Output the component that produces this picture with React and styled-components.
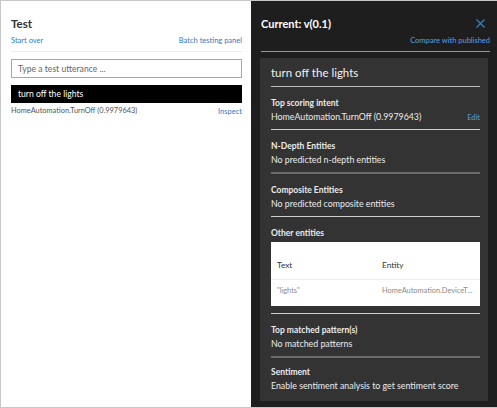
import React from 'react';
import styled, { createGlobalStyle } from 'styled-components';

const Global = createGlobalStyle`
  body {
    margin: 0;
    background: #fff;
    font-family: "Segoe UI", Lato, "Noto Sans", sans-serif;
  }
`;

const Frame = styled.div`
  width: 497px;
  height: 408px;
  box-sizing: border-box;
  border: 1px solid #c6c6c6;
  border-right: none;
  display: grid;
  grid-template-columns: 250px minmax(0, 1fr);
`;

const TestPanel = styled.div`
  padding: 14px 9px 0 10px;
  display: flex;
  flex-direction: column;
`;

const Title = styled.div`
  font-size: ${(p) => (p.dark ? 11 : 11.5)}px;
  font-weight: 700;
  color: ${(p) => (p.dark ? '#fff' : '#333')};
  line-height: 17px;
`;

const LinkRow = styled.div`
  display: flex;
  justify-content: ${(p) => p.justify || 'space-between'};
  margin-top: ${(p) => p.top || 0}px;
  padding-bottom: 5px;
  border-bottom: 1px solid ${(p) => p.line || '#ececec'};
`;

const Link = styled.span`
  font-size: 7.5px;
  color: ${(p) => (p.dark ? '#5aa0e0' : '#2b7bd0')};
  line-height: 11px;
  white-space: nowrap;
`;

const Input = styled.div`
  margin-top: 7px;
  height: 17px;
  border: 1px solid #a6a6a6;
  padding-left: 6px;
  display: flex;
  align-items: center;
  font-size: 8.6px;
  color: #666;
`;

const Utterance = styled.div`
  margin-top: 7px;
  height: 18px;
  background: #000;
  color: #fff;
  padding-left: 7px;
  display: flex;
  align-items: center;
  font-size: 8.6px;
`;

const ResultRow = styled.div`
  display: flex;
  justify-content: space-between;
  align-items: center;
  margin-top: 2px;
  font-size: 7.4px;
  color: #555;
  line-height: 12px;
`;

const InspectPanel = styled.div`
  background: #1e1e1e;
  padding: 14px 7px 6px 10px;
  display: flex;
  flex-direction: column;
  min-width: 0;
  overflow: hidden;
`;

const Header = styled.div`
  display: flex;
  justify-content: space-between;
  align-items: center;
  padding-right: 5px;
`;

const Card = styled.div`
  flex: 1;
  margin: 6px 2px 0 -1px;
  background: #333333;
  padding: 6px 8px 0 11px;
  color: #ececec;
`;

const Query = styled.div`
  font-size: 11.5px;
  line-height: 18px;
  color: #f2f2f2;
  padding-bottom: 4px;
  border-bottom: 1px solid #bdbdbd;
`;

const Section = styled.div`
  padding: ${(p) => p.top || 9}px 0 ${(p) => p.pad || 5}px;
  border-bottom: ${(p) => (p.heavy ? '2px solid #6a6a6a' : p.last ? 'none' : '1px solid #cfcfcf')};
`;

const Label = styled.div`
  font-size: 8.5px;
  font-weight: 700;
  line-height: 14px;
`;

const Value = styled.div`
  display: flex;
  justify-content: space-between;
  align-items: center;
  font-size: 8.8px;
  line-height: 14px;
  white-space: nowrap;
`;

const Table = styled.div`
  margin-top: 2px;
  background: #fff;
  padding: 16px 0 0;
  height: 64px;
  box-sizing: border-box;
`;

const TableRow = styled.div`
  display: grid;
  grid-template-columns: 105px minmax(0, 1fr);
  padding: 0 0 0 6px;
  height: ${(p) => p.h}px;
  align-items: ${(p) => (p.head ? 'start' : 'center')};
  line-height: 14px;
  font-size: ${(p) => (p.head ? 8.3 : 7.4)}px;
  color: ${(p) => (p.head ? '#333' : '#8a8a8a')};
  border-bottom: ${(p) => (p.head ? '1px solid #eee' : 'none')};
  white-space: nowrap;
  overflow: hidden;
`;

const Close = styled.svg`
  width: 9px;
  height: 9px;
  display: block;
`;

export default function App() {
  return (
    <>
      <Global />
      <Frame>
        <TestPanel>
          <Title>Test</Title>
          <LinkRow top={3}>
            <Link>Start over</Link>
            <Link>Batch testing panel</Link>
          </LinkRow>
          <Input>Type a test utterance ...</Input>
          <Utterance>turn off the lights</Utterance>
          <ResultRow>
            <span>HomeAutomation.TurnOff (0.9979643)</span>
            <Link>Inspect</Link>
          </ResultRow>
        </TestPanel>
        <InspectPanel>
          <Header>
            <Title dark>Current: v(0.1)</Title>
            <Close viewBox="0 0 9 9">
              <path d="M0.5 0.5 L8.5 8.5 M8.5 0.5 L0.5 8.5" stroke="#2b88d8" strokeWidth="1.1" />
            </Close>
          </Header>
          <LinkRow justify="flex-end" top={3} line="#9a9a9a">
            <Link dark>Compare with published</Link>
          </LinkRow>
          <Card>
            <Query>turn off the lights</Query>
            <Section>
              <Label>Top scoring intent</Label>
              <Value>
                <span>HomeAutomation.TurnOff (0.9979643)</span>
                <Link dark>Edit</Link>
              </Value>
            </Section>
            <Section heavy>
              <Label>N-Depth Entities</Label>
              <Value>No predicted n-depth entities</Value>
            </Section>
            <Section>
              <Label>Composite Entities</Label>
              <Value>No predicted composite entities</Value>
            </Section>
            <Section pad={7}>
              <Label>Other entities</Label>
              <Table>
                <TableRow head h={21}>
                  <span>Text</span>
                  <span>Entity</span>
                </TableRow>
                <TableRow h={22}>
                  <span>"lights"</span>
                  <span>HomeAutomation.DeviceT...</span>
                </TableRow>
              </Table>
            </Section>
            <Section heavy>
              <Label>Top matched pattern(s)</Label>
              <Value>No matched patterns</Value>
            </Section>
            <Section last top={7}>
              <Label>Sentiment</Label>
              <Value>Enable sentiment analysis to get sentiment score</Value>
            </Section>
          </Card>
        </InspectPanel>
      </Frame>
    </>
  );
}
